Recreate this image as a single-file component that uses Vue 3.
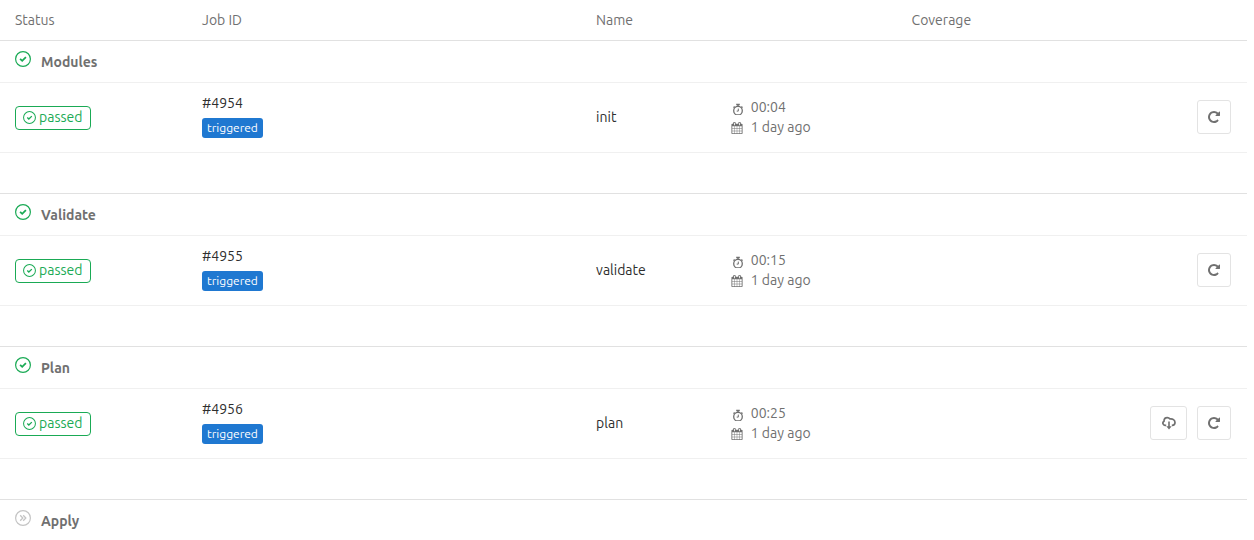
<script setup>
const stages = [
  {
    name: 'Modules',
    status: 'passed',
    jobs: [{ id: 4954, name: 'init', duration: '00:04', finished: '1 day ago', artifacts: false }],
  },
  {
    name: 'Validate',
    status: 'passed',
    jobs: [{ id: 4955, name: 'validate', duration: '00:15', finished: '1 day ago', artifacts: false }],
  },
  {
    name: 'Plan',
    status: 'passed',
    jobs: [{ id: 4956, name: 'plan', duration: '00:25', finished: '1 day ago', artifacts: true }],
  },
  { name: 'Apply', status: 'skipped', jobs: [] },
]
</script>

<template>
  <main class="page">
    <table class="builds">
      <colgroup>
        <col class="col-status" />
        <col class="col-job" />
        <col class="col-name" />
        <col class="col-time" />
        <col class="col-coverage" />
        <col class="col-actions" />
      </colgroup>
      <thead>
        <tr>
          <th scope="col">Status</th>
          <th scope="col">Job ID</th>
          <th scope="col">Name</th>
          <th></th>
          <th scope="col">Coverage</th>
          <th></th>
        </tr>
      </thead>
      <tbody v-for="stage in stages" :key="stage.name">
        <tr class="stage-row">
          <th colspan="6" scope="rowgroup">
            <div class="stage">
              <svg v-if="stage.status === 'passed'" class="stage-icon passed" viewBox="0 0 16 16" aria-hidden="true">
                <circle cx="8" cy="8" r="7.4" fill="none" stroke="currentColor" stroke-width="1.2" />
                <path d="M5.1 7.8 7.2 9.800 10.9 6.200" fill="none" stroke="currentColor" stroke-width="1.8" />
              </svg>
              <svg v-else class="stage-icon skipped" viewBox="0 0 16 16" aria-hidden="true">
                <circle cx="8" cy="8" r="7.4" fill="none" stroke="currentColor" stroke-width="1.2" />
                <path d="M5.2 5.3 7.8 8 5.2 10.7M8.2 5.3 10.8 8 8.2 10.7" fill="none" stroke="currentColor" stroke-width="1.3" />
              </svg>
              <span>{{ stage.name }}</span>
            </div>
          </th>
        </tr>
        <tr v-for="job in stage.jobs" :key="job.id" class="job-row">
          <td class="status-cell">
            <a class="badge" href="#">
              <svg class="badge-icon" viewBox="0 0 14 14" aria-hidden="true">
                <circle cx="7" cy="7" r="6.4" fill="none" stroke="currentColor" stroke-width="1.1" />
                <path d="M4.6 7 6.3 8.7 9.5 5.5" fill="none" stroke="currentColor" stroke-width="1.4" />
              </svg>
              <span class="badge-text">passed</span>
            </a>
          </td>
          <td class="job-cell">
            <a class="job-id" href="#">#{{ job.id }}</a>
            <span class="label">triggered</span>
          </td>
          <td><span class="job-name">{{ job.name }}</span></td>
          <td>
            <div class="meta">
              <svg class="meta-icon timer" viewBox="0 0 12 12" aria-hidden="true">
                <g fill="none" stroke="currentColor">
                  <circle cx="7" cy="7.700" r="4.300" stroke-width="1.300" />
                  <path d="M5.200 1.500h3.600M7 1.500v2M2.600 3.600l1 1M11.400 3.600l-1 1" stroke-width="1.500" />
                  <path d="M7.300 5.600v2.500H5.700" stroke-width="1" />
                </g>
              </svg>
              <span>{{ job.duration }}</span>
            </div>
            <div class="meta">
              <svg class="meta-icon" viewBox="64 0 1664 1792" aria-hidden="true">
                <path fill="currentColor" d="M192 1664h288v-288h-288v288zm352 0h320v-288h-320v288zm-352-352h288v-320h-288v320zm352 0h320v-320h-320v320zm-352-384h288v-288h-288v288zm736 736h320v-288h-320v288zm-384-736h320v-288h-320v288zm768 736h288v-288h-288v288zm-384-352h320v-320h-320v320zm-352-864v-288q0-13-9.5-22.5t-22.5-9.5h-64q-13 0-22.5 9.5t-9.5 22.5v288q0 13 9.5 22.5t22.5 9.5h64q13 0 22.5-9.5t9.5-22.5zm736 864h288v-320h-288v320zm-384-384h320v-288h-320v288zm384 0h288v-288h-288v288zm32-480v-288q0-13-9.5-22.5t-22.5-9.5h-64q-13 0-22.5 9.5t-9.5 22.5v288q0 13 9.5 22.5t22.5 9.5h64q13 0 22.5-9.5t9.5-22.5zm384-64v1280q0 52-38 90t-90 38h-1408q-52 0-90-38t-38-90v-1280q0-52 38-90t90-38h128v-96q0-66 47-113t113-47h64q66 0 113 47t47 113v96h384v-96q0-66 47-113t113-47h64q66 0 113 47t47 113v96h128q52 0 90 38t38 90z" />
              </svg>
              <span>{{ job.finished }}</span>
            </div>
          </td>
          <td></td>
          <td>
            <div class="actions">
              <button v-if="job.artifacts" type="button" class="btn btn-download" aria-label="Download artifacts">
                <svg class="download-icon" viewBox="0 0 14 14" aria-hidden="true">
                  <path d="M4.200 9.300H3.300A2.200 2.200 0 0 1 2 5.200C2 3.200 3.300 1.600 5.300 1.600c1.100 0 2 .4 2.700 1.300C10.700 2.500 13 4 13 6.500c0 1.600-1.200 2.800-2.900 2.800h-.3" fill="none" stroke="currentColor" stroke-width="1.700" />
                  <path d="M7 5.500v6.500" fill="none" stroke="currentColor" stroke-width="1.600" />
                  <path d="M4.300 10.300h5.400L7 13.600z" fill="currentColor" />
                </svg>
              </button>
              <button type="button" class="btn btn-retry" aria-label="Retry">
                <svg class="retry-icon" viewBox="0 0 1792 1792" aria-hidden="true">
                  <path fill="currentColor" d="M1664 256v448q0 26-19 45t-45 19h-448q-42 0-59-40-17-39 14-69l138-138q-148-137-349-137-104 0-198.500 40.500t-163.500 109.500-109.500 163.500-40.500 198.500 40.500 198.500 109.500 163.500 163.500 109.500 198.500 40.500q119 0 225-52t179-147q7-10 23-12 15 0 25 9l137 138q9 8 9.500 20.500t-7.500 22.500q-109 132-264 204.500t-327 72.500q-156 0-298-61t-245-164-164-245-61-298 61-298 164-245 245-164 298-61q147 0 284.500 55.500t244.500 156.500l130-129q29-31 70-14 39 17 39 59z" />
                </svg>
              </button>
            </div>
          </td>
        </tr>
        <tr v-if="stage.jobs.length" class="spacer-row">
          <td colspan="6"></td>
        </tr>
      </tbody>
    </table>
  </main>
</template>

<style>
body {
  background: #fff;
  overflow: hidden;
}
</style>

<style scoped>
.page {
  padding-right: 7px;
  color: #707070;
  font-family: Ubuntu, "Noto Sans", "Open Sans", sans-serif;
  font-size: 14px;
  line-height: 20px;
}

.builds {
  width: 100%;
  table-layout: fixed;
  border-collapse: separate;
  border-spacing: 0;
}

.col-status { width: 15%; }
.col-job { width: 31.6%; }
.col-name { width: 10.8%; }
.col-time { width: 14.5%; }
.col-coverage { width: 12.1%; }
.col-actions { width: 16%; }

th,
td {
  padding: 10px 16px 10px 15px;
  border-bottom: 1px solid #f0f0f0;
  text-align: left;
  vertical-align: middle;
}

thead th {
  border-bottom-color: #e1e1e1;
  font-weight: 400;
}

.stage-row th {
  padding-top: 11px;
  font-weight: 700;
}

.stage {
  display: flex;
  align-items: flex-start;
  gap: 10px;
  height: 20px;
}

.stage-icon {
  flex: none;
  width: 16px;
  height: 16px;
  margin-top: -1px;
}

.passed { color: #1aaa55; }
.skipped { color: #c4c4c4; }

.job-row td {
  height: 49px;
  padding-top: 9px;
  padding-bottom: 11px;
}

.job-row .status-cell {
  padding-top: 10px;
  padding-bottom: 10px;
}

.job-row .job-cell {
  padding-top: 8px;
  padding-bottom: 12px;
}

.spacer-row td {
  height: 20px;
  border-bottom-color: #e1e1e1;
}

.badge {
  display: inline-flex;
  align-items: center;
  gap: 3px;
  padding: 0 8px 0 7px;
  border: 1px solid #1aaa55;
  border-radius: 4px;
  color: #1aaa55;
  text-decoration: none;
  vertical-align: middle;
}

.badge-icon {
  width: 13px;
  height: 13px;
}

.badge-text {
  padding-bottom: 2px;
}

.job-id {
  display: block;
  color: #2e2e2e;
  text-decoration: none;
}

.label {
  display: block;
  width: fit-content;
  margin-top: 5px;
  padding: 0 5px;
  border-radius: 3px;
  background: #1f78d1;
  color: #fff;
  font-size: 12px;
}

.job-name {
  color: #2e2e2e;
}

.meta {
  display: flex;
  align-items: flex-end;
  gap: 8px;
}

.meta-icon {
  width: 12px;
  height: 12px;
  margin-bottom: 3px;
}

.timer {
  margin-bottom: 2px;
}

.actions {
  display: flex;
  justify-content: flex-end;
  gap: 10px;
}

.btn {
  display: flex;
  align-items: center;
  justify-content: center;
  height: 34px;
  padding: 0;
  border: 1px solid #e3e3e3;
  border-radius: 3px;
  background: #fff;
  color: #707070;
}

.btn-download { width: 37px; }
.btn-retry { width: 34px; }

.download-icon,
.retry-icon {
  width: 14px;
  height: 14px;
}
</style>
